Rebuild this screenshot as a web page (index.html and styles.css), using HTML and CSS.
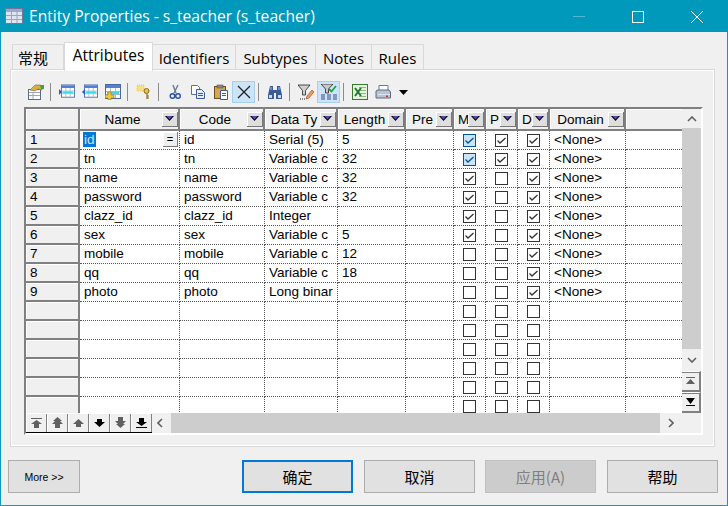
FILE: index.html
```html
<!DOCTYPE html>
<html lang="zh">
<head>
  <meta charset="UTF-8" />
  <title>Entity Properties - s_teacher (s_teacher)</title>
  <link rel="stylesheet" href="styles.css">
</head>
<body>
  <svg class="defs" width="0" height="0">
    <symbol id="caret" viewBox="0 0 9 5"><path d="M0 0h9L4.500 5z" fill="#000"/><path d="M1.500 0h6L4.500 3.500z" fill="#5a49b8"/></symbol>
    <symbol id="tick" viewBox="0 0 13 13"><path d="M2.500 6.500l2.500 2.500 5.500-5" fill="none" stroke="currentColor" stroke-width="1.300"/></symbol>
    <symbol id="table" viewBox="0 0 16 16">
      <rect x=".5" y=".5" width="15" height="14" fill="#fff" stroke="#4a6a9c"/>
      <rect x="1" y="1" width="14" height="3" fill="#4f7fd8"/>
      <path d="M1 7.500h14M1 10.500h14M5.500 4v10M10.500 4v10" stroke="#a8b8d0"/>
      <rect x="2" y="8" width="12" height="2" fill="#2fe0e6"/>
    </symbol>
  </svg>

  <div class="window">
    <header class="titlebar">
      <svg class="title-icon" width="18" height="16" viewBox="0 0 18 16">
        <rect x=".5" y=".5" width="17" height="15" fill="#dfe4f0" stroke="#6d7894"/>
        <rect x="1" y="1" width="16" height="3" fill="#9aa8d0"/>
        <path d="M1 7.500h16M1 11.500h16M6.500 4v11M12 4v11" stroke="#9aa4c0"/>
      </svg>
      <span class="title-text">Entity Properties - s_teacher (s_teacher)</span>
      <div class="win-controls">
        <svg width="46" height="32" viewBox="0 0 46 32"><path d="M15 16.500h12" stroke="#4fb7d0"/></svg>
        <svg width="46" height="32" viewBox="0 0 46 32"><rect x="16.500" y="11.500" width="11" height="11" fill="none" stroke="#fff"/></svg>
        <svg width="46" height="32" viewBox="0 0 46 32"><path d="M17 11l12 12M29 11L17 23" stroke="#fff" fill="none"/></svg>
      </div>
    </header>

    <nav class="tabs">
      <div class="tab tab-first">常规</div>
      <div class="tab active">Attributes</div>
      <div class="tab">Identifiers</div>
      <div class="tab">Subtypes</div>
      <div class="tab">Notes</div>
      <div class="tab">Rules</div>
    </nav>

    <section class="panel">
      <div class="toolbar">
        <span class="tb"><svg width="16" height="16" viewBox="0 0 16 16"><rect x=".5" y="5.500" width="12" height="10" fill="#fff" stroke="#5a6a8c"/><path d="M1 8.500h11M1 11.500h11M5 8v7" stroke="#9aa8c0"/><path d="M2 6l5-5h5l3 1-1 4-4-1-3 2z" fill="#d8b048" stroke="#7d6a20" stroke-width=".6"/><path d="M12 1l4 0v4l-3 0z" fill="#4f9a3a"/></svg></span>
        <i class="sep"></i>
        <span class="tb"><svg width="16" height="16" viewBox="0 0 16 16"><use href="#table" x="2" width="14" height="15"/><path d="M0 5l3 3-3 3z" fill="#2060c8"/></svg></span>
        <span class="tb"><svg width="16" height="16" viewBox="0 0 16 16"><use href="#table" x="2" width="14" height="15"/><path d="M3 5L0 8l3 3z" fill="#2060c8"/></svg></span>
        <span class="tb"><svg width="16" height="16" viewBox="0 0 16 16"><use href="#table" width="16" height="16"/><path d="M3 8h3v3h3v3H6v2H3v-2H0v-3h3z" fill="#f0c830" stroke="#9a7a10" stroke-width=".6"/></svg></span>
        <i class="sep"></i>
        <span class="tb"><svg width="16" height="16" viewBox="0 0 16 16"><rect x="1" y="1" width="7" height="6" fill="#f4e08a" stroke="#e8c860" stroke-dasharray="1 1"/><circle cx="10.500" cy="7" r="2.500" fill="#e8c050" stroke="#8a6a20"/><path d="M11 9.500v5.500M11 12h2M11 14h2" stroke="#8a6a20" stroke-width="1.200"/></svg></span>
        <i class="sep"></i>
        <span class="tb"><svg width="16" height="16" viewBox="0 0 16 16"><path d="M6 1l3 8M11 1L7 9" stroke="#6a7a90" stroke-width="1.400" fill="none"/><circle cx="5.500" cy="12" r="2.300" fill="none" stroke="#2850a8" stroke-width="1.400"/><circle cx="11" cy="12" r="2.300" fill="none" stroke="#2850a8" stroke-width="1.400"/></svg></span>
        <span class="tb"><svg width="16" height="16" viewBox="0 0 16 16"><path d="M1.500 1.500h6l2 2v7h-8z" fill="#fff" stroke="#5a6f9c"/><path d="M6.500 5.500h5l3 3v6h-8z" fill="#e4ecf8" stroke="#3a5a9c"/><path d="M8 9.500h5M8 11.500h5" stroke="#3a5a9c"/></svg></span>
        <span class="tb"><svg width="16" height="16" viewBox="0 0 16 16"><rect x="1.500" y="2.500" width="11" height="12" fill="#d8a848" stroke="#6a5020"/><rect x="4" y="1" width="6" height="3" fill="#888" stroke="#444" stroke-width=".5"/><path d="M7.500 6.500h7v9h-7z" fill="#fff" stroke="#3a5a9c"/><path d="M9 9.500h4M9 11.500h4" stroke="#3a5a9c"/></svg></span>
        <span class="tb on"><svg width="16" height="16" viewBox="0 0 16 16"><path d="M2 2l12 12M14 2L2 14" stroke="#222" stroke-width="1.300"/></svg></span>
        <i class="sep"></i>
        <span class="tb"><svg width="16" height="16" viewBox="0 0 16 16"><path d="M3 2h3v4h4V2h3l2 9v4h-6V9H7v6H1v-4z" fill="#3a5a9c"/><path d="M2 11h3v3H2zM11 11h3v3h-3z" fill="#c8d8f0"/><path d="M3.500 3h1v3h-1zM11.500 3h1v3h-1z" fill="#a0b8e0"/></svg></span>
        <i class="sep"></i>
        <span class="tb"><svg width="16" height="16" viewBox="0 0 16 16"><path d="M0 1h12L7.500 6.500V11h-3V6.500z" fill="#d0d0d0" stroke="#222" stroke-width=".8"/><path d="M9 12l5-6 2 2-5 6-3 1z" fill="#e8a050" stroke="#a04030" stroke-width=".6"/><path d="M2 15h1M4 15h1M6 15h1" stroke="#222"/></svg></span>
        <span class="tb on"><svg width="16" height="16" viewBox="0 0 16 16"><path d="M0 0h12L7.500 5V9h-3V5z" fill="#c8c8c8" stroke="#222" stroke-width=".8"/><path d="M8 5l2.500 2.500L15 2" fill="none" stroke="#18a838" stroke-width="1.800"/><path d="M0 11h4M6 11h4M12 11h4M0 13h4M6 13h4M12 13h4M0 15h4M6 15h4M12 15h4" stroke="#3a4a8c"/></svg></span>
        <i class="sep"></i>
        <span class="tb"><svg width="16" height="16" viewBox="0 0 16 16"><rect x=".5" y=".5" width="15" height="15" fill="#e8f0e0" stroke="#3a7a30"/><path d="M7 3.500h7M7 6.500h7M7 9.500h7M7 12.500h7" stroke="#8ab880"/><path d="M3 4l6 8M9 4l-6 8" stroke="#1f7a30" stroke-width="2"/></svg></span>
        <span class="tb"><svg width="16" height="16" viewBox="0 0 16 16"><path d="M4 1.500h9v5H4z" fill="#fff" stroke="#6a7a90"/><path d="M1 7l2-1h11l1.500 2v6H1z" fill="#b8c4d4" stroke="#5a6a80"/><path d="M3 10h12v1H3z" fill="#dfe6f0"/><rect x="11" y="11.500" width="2" height="1.500" fill="#d03030"/></svg></span>
        <svg class="tb-caret" width="9" height="5" viewBox="0 0 9 5"><path d="M0 0h9L4.500 5z" fill="#000"/></svg>
      </div>

      <div class="grid">
        <div class="view">
          <table class="attrs">
            <colgroup>
              <col class="c-num"><col class="c-name"><col class="c-code"><col class="c-type"><col class="c-len"><col class="c-pre"><col class="c-flag"><col class="c-flag"><col class="c-flag"><col class="c-dom"><col class="c-fill">
            </colgroup>
            <thead>
              <tr>
                <th></th>
                <th><div class="hd"><span>Name</span><b><svg width="9" height="5"><use href="#caret"/></svg></b></div></th>
                <th><div class="hd"><span>Code</span><b><svg width="9" height="5"><use href="#caret"/></svg></b></div></th>
                <th><div class="hd"><span>Data Ty</span><b><svg width="9" height="5"><use href="#caret"/></svg></b></div></th>
                <th><div class="hd"><span>Length</span><b><svg width="9" height="5"><use href="#caret"/></svg></b></div></th>
                <th><div class="hd"><span>Pre</span><b><svg width="9" height="5"><use href="#caret"/></svg></b></div></th>
                <th><div class="hd narrow"><span>M</span><b><svg width="9" height="5"><use href="#caret"/></svg></b></div></th>
                <th><div class="hd narrow"><span>P</span><b><svg width="9" height="5"><use href="#caret"/></svg></b></div></th>
                <th><div class="hd narrow"><span>D</span><b><svg width="9" height="5"><use href="#caret"/></svg></b></div></th>
                <th><div class="hd"><span>Domain</span><b><svg width="9" height="5"><use href="#caret"/></svg></b></div></th>
                <th class="blank"></th>
              </tr>
            </thead>
            <tbody>
              <tr><th>1</th><td class="editing"><span class="sel">id</span><b class="eq">=</b></td><td>id</td><td>Serial (5)</td><td>5</td><td></td><td class="f"><span class="cb blue"><svg width="13" height="13"><use href="#tick"/></svg></span></td><td class="f"><span class="cb"><svg width="13" height="13"><use href="#tick"/></svg></span></td><td class="f"><span class="cb"><svg width="13" height="13"><use href="#tick"/></svg></span></td><td>&lt;None&gt;</td><td></td></tr>
              <tr><th>2</th><td>tn</td><td>tn</td><td>Variable c</td><td>32</td><td></td><td class="f"><span class="cb blue"><svg width="13" height="13"><use href="#tick"/></svg></span></td><td class="f"><span class="cb"><svg width="13" height="13"><use href="#tick"/></svg></span></td><td class="f"><span class="cb"><svg width="13" height="13"><use href="#tick"/></svg></span></td><td>&lt;None&gt;</td><td></td></tr>
              <tr><th>3</th><td>name</td><td>name</td><td>Variable c</td><td>32</td><td></td><td class="f"><span class="cb"><svg width="13" height="13"><use href="#tick"/></svg></span></td><td class="f"><span class="cb"></span></td><td class="f"><span class="cb"><svg width="13" height="13"><use href="#tick"/></svg></span></td><td>&lt;None&gt;</td><td></td></tr>
              <tr><th>4</th><td>password</td><td>password</td><td>Variable c</td><td>32</td><td></td><td class="f"><span class="cb"><svg width="13" height="13"><use href="#tick"/></svg></span></td><td class="f"><span class="cb"></span></td><td class="f"><span class="cb"><svg width="13" height="13"><use href="#tick"/></svg></span></td><td>&lt;None&gt;</td><td></td></tr>
              <tr><th>5</th><td>clazz_id</td><td>clazz_id</td><td>Integer</td><td></td><td></td><td class="f"><span class="cb"><svg width="13" height="13"><use href="#tick"/></svg></span></td><td class="f"><span class="cb"></span></td><td class="f"><span class="cb"><svg width="13" height="13"><use href="#tick"/></svg></span></td><td>&lt;None&gt;</td><td></td></tr>
              <tr><th>6</th><td>sex</td><td>sex</td><td>Variable c</td><td>5</td><td></td><td class="f"><span class="cb"><svg width="13" height="13"><use href="#tick"/></svg></span></td><td class="f"><span class="cb"></span></td><td class="f"><span class="cb"><svg width="13" height="13"><use href="#tick"/></svg></span></td><td>&lt;None&gt;</td><td></td></tr>
              <tr><th>7</th><td>mobile</td><td>mobile</td><td>Variable c</td><td>12</td><td></td><td class="f"><span class="cb"></span></td><td class="f"><span class="cb"></span></td><td class="f"><span class="cb"><svg width="13" height="13"><use href="#tick"/></svg></span></td><td>&lt;None&gt;</td><td></td></tr>
              <tr><th>8</th><td>qq</td><td>qq</td><td>Variable c</td><td>18</td><td></td><td class="f"><span class="cb"></span></td><td class="f"><span class="cb"></span></td><td class="f"><span class="cb"><svg width="13" height="13"><use href="#tick"/></svg></span></td><td>&lt;None&gt;</td><td></td></tr>
              <tr><th>9</th><td>photo</td><td>photo</td><td>Long binar</td><td></td><td></td><td class="f"><span class="cb"></span></td><td class="f"><span class="cb"></span></td><td class="f"><span class="cb"><svg width="13" height="13"><use href="#tick"/></svg></span></td><td>&lt;None&gt;</td><td></td></tr>
              <tr><th></th><td></td><td></td><td></td><td></td><td></td><td class="f"><span class="cb"></span></td><td class="f"><span class="cb"></span></td><td class="f"><span class="cb"></span></td><td></td><td></td></tr>
              <tr><th></th><td></td><td></td><td></td><td></td><td></td><td class="f"><span class="cb"></span></td><td class="f"><span class="cb"></span></td><td class="f"><span class="cb"></span></td><td></td><td></td></tr>
              <tr><th></th><td></td><td></td><td></td><td></td><td></td><td class="f"><span class="cb"></span></td><td class="f"><span class="cb"></span></td><td class="f"><span class="cb"></span></td><td></td><td></td></tr>
              <tr><th></th><td></td><td></td><td></td><td></td><td></td><td class="f"><span class="cb"></span></td><td class="f"><span class="cb"></span></td><td class="f"><span class="cb"></span></td><td></td><td></td></tr>
              <tr><th></th><td></td><td></td><td></td><td></td><td></td><td class="f"><span class="cb"></span></td><td class="f"><span class="cb"></span></td><td class="f"><span class="cb"></span></td><td></td><td></td></tr>
              <tr><th></th><td></td><td></td><td></td><td></td><td></td><td class="f"><span class="cb"></span></td><td class="f"><span class="cb"></span></td><td class="f"><span class="cb"></span></td><td></td><td></td></tr>
            </tbody>
          </table>
        </div>

        <div class="vbar">
          <div class="arrow"><svg width="10" height="6" viewBox="0 0 10 6"><path d="M1 5l4-4 4 4" fill="none" stroke="#606060" stroke-width="1.600"/></svg></div>
          <div class="thumb"></div>
          <div class="arrow down"><svg width="10" height="6" viewBox="0 0 10 6"><path d="M1 1l4 4 4-4" fill="none" stroke="#606060" stroke-width="1.600"/></svg></div>
          <div class="move"><svg width="9" height="8" viewBox="0 0 9 8"><path d="M0 0h9v1H0zM4.500 2L9 7H0z" fill="#606060"/></svg></div>
          <div class="move"><svg width="9" height="8" viewBox="0 0 9 8"><path d="M0 8h9V7H0zM4.500 6L9 0H0z" fill="#000"/></svg></div>
        </div>

        <div class="hbar">
          <div class="navs">
            <span class="nav"><svg width="11" height="10" viewBox="0 0 11 10"><path d="M0 0h11v1H0zM5.500 2L11 6H8v4H3V6H0z" fill="#606060"/></svg></span>
            <span class="nav"><svg width="11" height="11" viewBox="0 0 11 11"><path d="M5.500 0L10 4H8l3 3H8v4H3V7H0l3-3H1z" fill="#606060"/></svg></span>
            <span class="nav"><svg width="11" height="8" viewBox="0 0 11 8"><path d="M5.500 0L11 5H8v3H3V5H0z" fill="#606060"/></svg></span>
            <span class="nav"><svg width="11" height="8" viewBox="0 0 11 8"><path d="M5.500 8L11 3H8V0H3v3H0z" fill="#000"/></svg></span>
            <span class="nav"><svg width="11" height="11" viewBox="0 0 11 11"><path d="M5.500 11L10 7H8l3-3H8V0H3v4H0l3 3H1z" fill="#606060"/></svg></span>
            <span class="nav"><svg width="11" height="10" viewBox="0 0 11 10"><path d="M0 10h11V9H0zM5.500 8L11 4H8V0H3v4H0z" fill="#000"/></svg></span>
          </div>
          <div class="harrow"><svg width="6" height="10" viewBox="0 0 6 10"><path d="M5 1L1 5l4 4" fill="none" stroke="#606060" stroke-width="1.600"/></svg></div>
          <div class="htrack"></div>
          <div class="harrow"><svg width="6" height="10" viewBox="0 0 6 10"><path d="M1 1l4 4-4 4" fill="none" stroke="#606060" stroke-width="1.600"/></svg></div>
        </div>
      </div>
    </section>

    <footer class="footer">
      <button class="btn more">More &gt;&gt;</button>
      <div class="actions">
        <button class="btn primary">确定</button>
        <button class="btn">取消</button>
        <button class="btn disabled">应用(A)</button>
        <button class="btn">帮助</button>
      </div>
    </footer>
  </div>
</body>
</html>
```

FILE: styles.css
```css
* {
  box-sizing: border-box;
}

body {
  margin: 0;
  width: 728px;
  height: 506px;
  overflow: hidden;
  font-family: "Open Sans", "Noto Sans CJK SC", sans-serif;
  color: #000;
}

.defs {
  display: block;
  height: 0;
}

.window {
  width: 728px;
  height: 506px;
  background-color: #f0f0f0;
  border: 1px solid #0f9abb;
  border-top: none;
}

.titlebar {
  height: 32px;
  margin: 0 -1px;
  background-color: #0099bc;
  color: #fff;
  display: flex;
  align-items: center;
  padding-left: 5px;
}

.title-icon {
  margin-right: 6px;
}

.title-text {
  font-size: 15.6px;
  flex: 1;
}

.win-controls {
  display: flex;
  gap: 12px;
  margin-right: 8px;
}

.win-controls svg {
  display: block;
}

.tabs {
  display: flex;
  align-items: flex-end;
  height: 28px;
  margin: 10px 0 -1px 11px;
}

.tab {
  height: 26px;
  padding-top: 2px;
  border: 1px solid #d9d9d9;
  border-bottom: none;
  border-left: none;
  font-size: 15px;
  line-height: 22px;
  text-align: center;
  width: 83px;
}

.tab-first {
  width: 52px;
  padding-right: 10px;
  border-left: 1px solid #d9d9d9;
}

.tab:nth-child(4) {
  width: 80px;
}

.tab:nth-child(5) {
  width: 56px;
}

.tab:nth-child(6) {
  width: 52px;
}

.tab.active {
  position: relative;
  width: 89px;
  height: 29px;
  margin-bottom: -1px;
  background-color: #fff;
  padding-top: 1px;
  border-left: 1px solid #d9d9d9;
  font-size: 15.5px;
}

.panel {
  width: 705px;
  height: 378px;
  margin-left: 9px;
  border: 1px solid #d9d9d9;
  box-shadow: inset 0 0 0 1px #fff;
  padding: 11px 12px 11px 13px;
}

.toolbar {
  display: flex;
  align-items: center;
  height: 22px;
  margin-bottom: 4px;
}

.tb {
  width: 23px;
  height: 22px;
  display: flex;
  align-items: center;
  justify-content: center;
  flex: none;
}

.tb.on {
  background-color: #cce4f7;
  border: 1px solid #a8cfec;
}

.sep {
  width: 1px;
  height: 18px;
  margin: 0 4px 0 3px;
  background-color: #8c8c8c;
  flex: none;
}

.tb-caret {
  margin-left: 5px;
}

.grid {
  width: 679px;
  height: 328px;
  border-top: 2px solid #808080;
  border-left: 2px solid #808080;
  border-right: 2px solid #fff;
  border-bottom: 2px solid #fff;
  display: grid;
  grid-template-columns: 656px 19px;
  grid-template-rows: 304px 20px;
  font-family: "Liberation Sans", "Open Sans", sans-serif;
}

.view {
  overflow: hidden;
  background-color: #fff;
}

.attrs {
  width: 656px;
  table-layout: fixed;
  border-collapse: separate;
  border-spacing: 0;
  font-size: 13.5px;
}

.c-num { width: 54px; }
.c-name { width: 100px; }
.c-code { width: 85px; }
.c-type { width: 73px; }
.c-len { width: 68px; }
.c-pre { width: 48px; }
.c-flag { width: 32px; }
.c-dom { width: 76px; }
.c-fill { width: 56px; }

.attrs th {
  padding: 0;
  background-color: #f0f0f0;
  font-weight: normal;
  border-right: 2px solid #808080;
  border-bottom: 2px solid #808080;
  box-shadow: inset 1px 1px 0 #fff;
}

.attrs thead th {
  height: 22px;
}

.attrs thead th.blank {
  background-color: #f0f0f0;
  border-right: none;
}

.attrs tbody th {
  height: 19px;
  text-align: left;
  padding-left: 4px;
  font-size: 13.5px;
  line-height: 16px;
}

.attrs td {
  height: 19px;
  padding: 0 0 0 4px;
  border-right: 1px dotted #555;
  border-bottom: 1px dotted #555;
  white-space: nowrap;
  overflow: hidden;
  line-height: 16px;
}

.attrs td:last-child {
  border-right: none;
}

.attrs td.f {
  padding: 0;
}

.hd {
  display: flex;
  align-items: center;
  height: 20px;
  padding: 0 0 0 3px;
  font-size: 13.5px;
}

.hd span {
  flex: 1;
  min-width: 0;
  overflow: hidden;
  white-space: nowrap;
  text-align: center;
}

.hd.narrow {
  padding-left: 4px;
}

.hd.narrow span {
  text-align: left;
  overflow: visible;
}

.hd b {
  flex: none;
  width: 16px;
  height: 15px;
  display: flex;
  align-items: center;
  justify-content: center;
  background-color: #dedede;
  border-right: 1px solid #777;
  border-bottom: 1px solid #777;
  box-shadow: inset 1px 1px 0 #fff;
}

.hd svg {
  display: block;
}

.editing {
  position: relative;
}

.sel {
  display: inline-block;
  height: 15px;
  padding: 0 1px;
  margin-left: -1px;
  background-color: #0078d7;
  color: #cfe4f5;
  line-height: 15px;
}

.eq {
  position: absolute;
  right: 1px;
  top: 1px;
  width: 15px;
  height: 15px;
  background-color: #eee;
  border-right: 1px solid #777;
  border-bottom: 1px solid #777;
  box-shadow: inset 1px 1px 0 #fff;
  font-weight: normal;
  font-size: 11px;
  line-height: 14px;
  text-align: center;
}

.cb {
  display: block;
  width: 13px;
  height: 13px;
  margin: 0 auto;
  border: 1px solid #333;
  background-color: #fff;
  color: #333;
}

.cb svg {
  display: block;
  margin: -1px;
}

.cb.blue {
  border-color: #005499;
  background-color: #cce4f7;
  color: #005499;
}

.vbar {
  display: flex;
  flex-direction: column;
  background-color: #f0f0f0;
}

.arrow {
  height: 19px;
  display: flex;
  align-items: center;
  justify-content: center;
  flex: none;
}

.arrow.down {
  height: 22px;
}

.thumb {
  flex: 1;
  background-color: #cdcdcd;
}

.move {
  height: 21px;
  flex: none;
  display: flex;
  align-items: center;
  justify-content: center;
  border-top: 1px solid #fff;
  border-right: 2px solid #808080;
  border-bottom: 2px solid #808080;
  box-shadow: inset 0 1px 0 #808080;
}

.hbar {
  grid-column: 1 / 3;
  display: flex;
  background-color: #f0f0f0;
  height: 20px;
}

.navs {
  display: flex;
  border-bottom: 1px solid #000;
}

.nav {
  width: 21px;
  display: flex;
  align-items: center;
  justify-content: center;
  box-shadow: inset 1px 1px 0 #fff, inset -1px 0 0 #808080;
}

.harrow {
  width: 19px;
  padding-right: 3px;
  flex: none;
  display: flex;
  align-items: center;
  justify-content: center;
}

.harrow:last-child {
  width: 41px;
  padding-right: 19px;
}

.htrack {
  flex: 1;
  background-color: #cdcdcd;
}

.footer {
  display: flex;
  justify-content: space-between;
  margin: 13px 9px 0 7px;
}

.actions {
  display: flex;
  gap: 11px;
}

.btn {
  width: 111px;
  height: 33px;
  padding: 0;
  background-color: #e1e1e1;
  border: 1px solid #adadad;
  font-family: "Noto Sans CJK SC", "Open Sans", sans-serif;
  font-size: 15px;
  color: #000;
}

.btn.more {
  width: 72px;
  font-family: "Liberation Sans", sans-serif;
  font-size: 10.5px;
}

.btn.primary {
  border: 2px solid #0078d7;
}

.btn.disabled {
  margin-left: -1px;
  background-color: #ccc;
  border-color: #bfbfbf;
  color: #7f7f7f;
}
```
